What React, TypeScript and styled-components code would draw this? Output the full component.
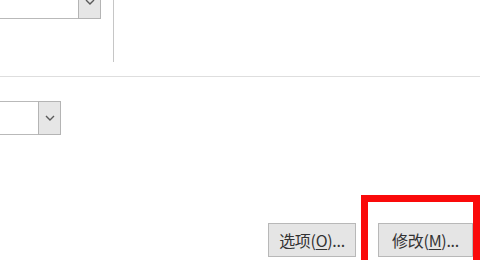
import styled, { createGlobalStyle } from "styled-components";

const GlobalStyle = createGlobalStyle`
  html, body {
    margin: 0;
    padding: 0;
    background: #ffffff;
  }
  body {
    font-family: "Noto Sans CJK SC", "Noto Sans", sans-serif;
  }
`;

const Page = styled.div`
  position: relative;
  width: 480px;
  height: 260px;
  overflow: hidden;
  display: flex;
  flex-direction: column;
  background: #ffffff;
`;

const TopArea = styled.div`
  display: flex;
  align-items: flex-start;
  height: 76px;
`;

const Combo = styled.div<{ $fieldWidth: number; $offsetTop: number }>`
  display: flex;
  height: 34px;
  margin-top: ${(p) => p.$offsetTop}px;
  margin-left: -2px;

  & > span:first-child {
    width: ${(p) => p.$fieldWidth}px;
  }
`;

const Field = styled.span`
  box-sizing: border-box;
  height: 100%;
  background: #ffffff;
  border: 1px solid #b9b9b9;
  border-right: none;
`;

const DropButton = styled.span`
  box-sizing: border-box;
  width: 23px;
  height: 100%;
  display: flex;
  align-items: center;
  justify-content: center;
  background: #e6e6e6;
  border: 1px solid #b4b4b4;
`;

const VDivider = styled.div`
  width: 1px;
  height: 62px;
  margin-left: 12px;
  background: #c6c6c6;
`;

const Separator = styled.div`
  height: 1px;
  background: #dedede;
`;

const Footer = styled.div`
  margin-top: auto;
  display: flex;
  justify-content: flex-end;
  gap: 22px;
  padding: 0 7px 3px 0;
`;

const Button = styled.button<{ $width: number }>`
  box-sizing: border-box;
  width: ${(p) => p.$width}px;
  height: 34px;
  padding: 0;
  background: #e5e5e5;
  border: 1px solid #b8b8b8;
  border-radius: 0;
  color: #333333;
  font-family: "Noto Sans CJK SC", "Noto Sans", sans-serif;
  font-size: 16px;
  line-height: 32px;
  letter-spacing: -0.3px;

  u {
    text-underline-offset: 2px;
  }
`;

const Highlight = styled.div`
  position: absolute;
  left: 361px;
  top: 195px;
  right: 0;
  bottom: -20px;
  border: 7px solid #fa0a0a;
  pointer-events: none;
`;

function Chevron() {
  return (
    <svg width="10" height="6" viewBox="0 0 10 6">
      <path d="M1 1 L5 5 L9 1" fill="none" stroke="#5a5a5a" strokeWidth="1.4" />
    </svg>
  );
}

export default function App() {
  return (
    <>
      <GlobalStyle />
      <Page>
        <TopArea>
          <Combo $fieldWidth={80} $offsetTop={-15}>
            <Field />
            <DropButton>
              <Chevron />
            </DropButton>
          </Combo>
          <VDivider />
        </TopArea>
        <Separator />
        <Combo $fieldWidth={40} $offsetTop={24}>
          <Field />
          <DropButton>
            <Chevron />
          </DropButton>
        </Combo>
        <Footer>
          <Button $width={88}>
            选项(<u>O</u>)...
          </Button>
          <Button $width={95}>
            修改(<u>M</u>)...
          </Button>
        </Footer>
        <Highlight />
      </Page>
    </>
  );
}
